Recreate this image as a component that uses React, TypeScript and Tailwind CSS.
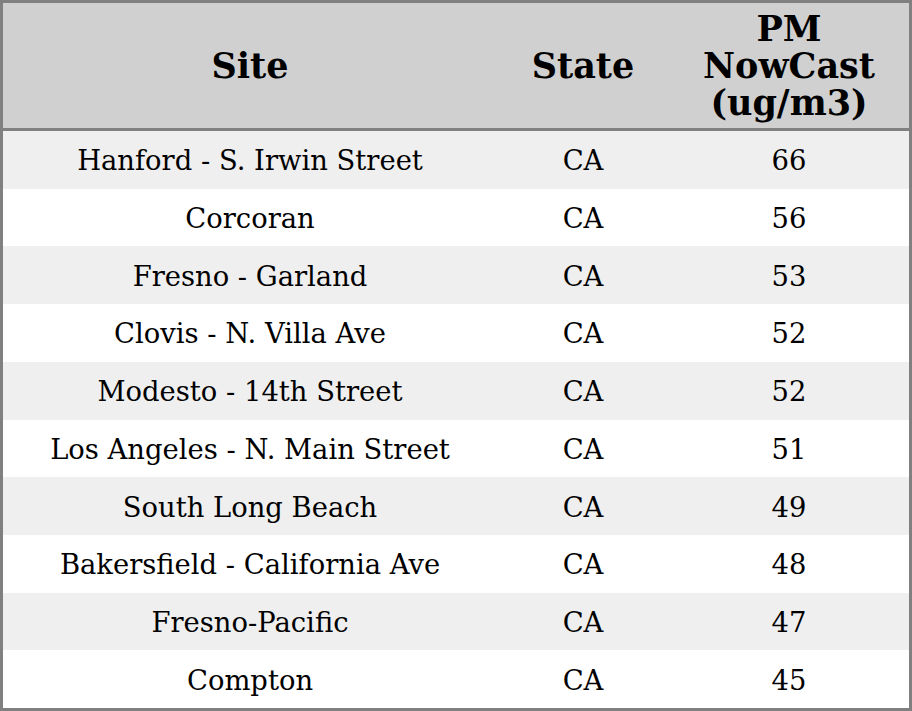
const ROWS = [
  { site: "Hanford - S. Irwin Street", state: "CA", pm: 66 },
  { site: "Corcoran", state: "CA", pm: 56 },
  { site: "Fresno - Garland", state: "CA", pm: 53 },
  { site: "Clovis - N. Villa Ave", state: "CA", pm: 52 },
  { site: "Modesto - 14th Street", state: "CA", pm: 52 },
  { site: "Los Angeles - N. Main Street", state: "CA", pm: 51 },
  { site: "South Long Beach", state: "CA", pm: 49 },
  { site: "Bakersfield - California Ave", state: "CA", pm: 48 },
  { site: "Fresno-Pacific", state: "CA", pm: 47 },
  { site: "Compton", state: "CA", pm: 45 },
];

export default function App() {
  return (
    <div className="w-[912px] h-[711px] bg-white font-['DejaVu_Serif',serif] text-black">
      <div className="border-[3px] border-[#808080] h-[711px] flex flex-col">
        {/* Header */}
        <div className="grid grid-cols-[494px_172px_1fr] h-[128px] shrink-0 bg-[#d0d0d0] border-b-[3px] border-[#808080] text-[35px] font-bold leading-[37px] items-center text-center">
          <div>Site</div>
          <div>State</div>
          <div>
            PM
            <br />
            NowCast
            <br />
            (ug/m3)
          </div>
        </div>

        {/* Rows */}
        <div className="flex-1 flex flex-col">
          {ROWS.map((row, i) => (
            <div
              key={i}
              className={`flex-1 grid grid-cols-[494px_172px_1fr] items-center text-center text-[27.4px] pt-[2px] ${
                i % 2 === 0 ? "bg-[#efefef]" : "bg-white"
              }`}
            >
              <div>{row.site}</div>
              <div>{row.state}</div>
              <div>{row.pm}</div>
            </div>
          ))}
        </div>
      </div>
    </div>
  );
}
